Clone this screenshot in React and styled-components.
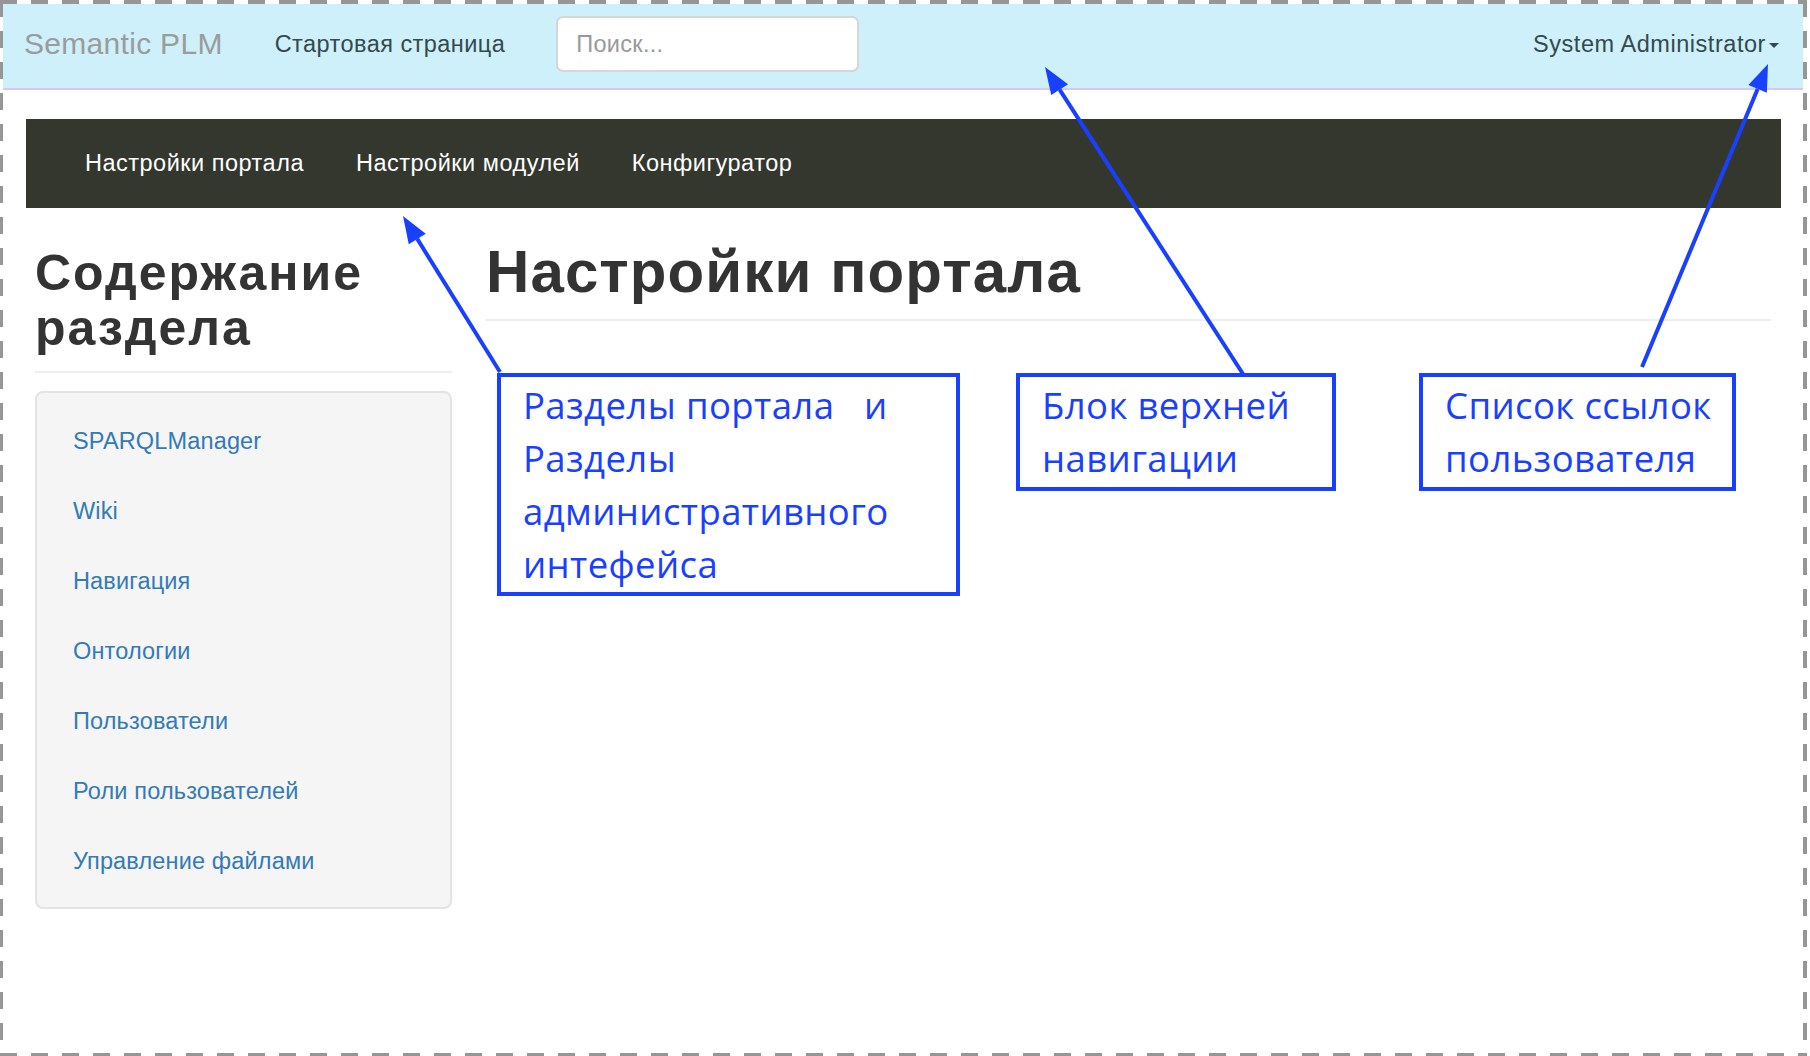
import React from "react";
import styled, { createGlobalStyle } from "styled-components";

const GlobalStyle = createGlobalStyle`
  html, body {
    margin: 0;
    padding: 0;
    background: #ffffff;
  }
  body {
    font-family: "Liberation Sans", Arial, sans-serif;
    font-size: 23.5px;
    color: #333333;
  }
  * {
    box-sizing: border-box;
  }
`;

const dashH = "repeating-linear-gradient(90deg, #969696 0 17px, transparent 17px 31px)";
const dashV = "repeating-linear-gradient(180deg, #969696 0 17px, transparent 17px 31px)";

const Frame = styled.div`
  position: relative;
  width: 1807px;
  height: 1056px;
  padding: 4px 4px 3px 3px;
  background:
    ${dashH} left top / 100% 4px no-repeat,
    ${dashH} left bottom / 100% 3px no-repeat,
    ${dashV} left top / 3px 100% no-repeat,
    ${dashV} right top / 4px 100% no-repeat;
`;

const TopBar = styled.header`
  display: flex;
  align-items: center;
  height: 86px;
  padding: 0 24px 4px 21px;
  background: #cdf0fb;
  border-bottom: 2px solid #d8c8ef;
`;

const Brand = styled.span`
  font-size: 30px;
  letter-spacing: 0.3px;
  color: #9b9b9b;
  margin-right: 52px;
`;

const TopLink = styled.span`
  color: #34494d;
  letter-spacing: 0.45px;
  margin-right: 51px;
`;

const Search = styled.input`
  width: 303px;
  height: 56px;
  padding: 0 18px;
  font-family: inherit;
  font-size: 23.5px;
  letter-spacing: 0.3px;
  color: #555;
  background: #ffffff;
  border: 2px solid #d6d6d6;
  border-radius: 7px;
  outline: none;

  &::placeholder {
    color: #999999;
  }
`;

const UserMenu = styled.span`
  display: flex;
  align-items: center;
  margin-left: auto;
  letter-spacing: 0.55px;
  color: #34494d;
`;

const Caret = styled.span`
  width: 0;
  height: 0;
  margin-left: 3px;
  margin-top: 2px;
  border-top: 5px solid #34494d;
  border-left: 5.5px solid transparent;
  border-right: 5.5px solid transparent;
`;

const AdminBar = styled.nav`
  display: flex;
  align-items: center;
  height: 89px;
  margin: 29px 22px 0 23px;
  padding-left: 33px;
  background: #33372e;
`;

const AdminLink = styled.span`
  padding: 0 26px;
  letter-spacing: 0.5px;
  color: #ffffff;
`;

const Content = styled.div`
  display: grid;
  grid-template-columns: 417px 1285px;
  column-gap: 34px;
  padding-left: 32px;
`;

const SideTitle = styled.h2`
  margin: 38px 0 18px;
  padding-bottom: 15px;
  font-size: 50px;
  line-height: 55px;
  font-weight: 700;
  letter-spacing: 2px;
  color: #333333;
  border-bottom: 2px solid #eeeeee;
`;

const Well = styled.ul`
  margin: 0;
  padding: 13px 0 11px;
  list-style: none;
  background: #f5f5f5;
  border: 2px solid #e3e3e3;
  border-radius: 8px;
`;

const WellLink = styled.li`
  height: 70px;
  line-height: 70px;
  padding-left: 36px;
  letter-spacing: 0.15px;
  color: #337ab7;
`;

const PageTitle = styled.h1`
  margin: 31px 0 0;
  padding-bottom: 14px;
  font-size: 60px;
  line-height: 66px;
  font-weight: 700;
  letter-spacing: 1.1px;
  color: #333333;
  border-bottom: 2px solid #eeeeee;
`;

const Note = styled.div`
  position: absolute;
  left: ${(p) => p.$x}px;
  top: ${(p) => p.$y}px;
  width: ${(p) => p.$w}px;
  height: ${(p) => p.$h}px;
  padding: 2px 8px 0 22px;
  border: 4px solid #1940ff;
  font-family: "Open Sans", "Noto Sans", sans-serif;
  font-size: 36.5px;
  line-height: 53px;
  letter-spacing: 0.4px;
  color: #1940ff;
  white-space: pre;
`;

const Arrows = styled.svg`
  position: absolute;
  left: 0;
  top: 0;
  pointer-events: none;
`;

const arrows = [
  { from: [500, 372], to: [403, 216] },
  { from: [1243, 374], to: [1045, 67] },
  { from: [1642, 367], to: [1768, 64] },
];

function Arrow({ from, to }) {
  const [x1, y1] = from;
  const [x2, y2] = to;
  const dx = x2 - x1;
  const dy = y2 - y1;
  const len = Math.hypot(dx, dy);
  const ux = dx / len;
  const uy = dy / len;
  const headLen = 27;
  const half = 10;
  const bx = x2 - ux * headLen;
  const by = y2 - uy * headLen;
  const pts = [
    [x2, y2],
    [bx - uy * half, by + ux * half],
    [bx + uy * half, by - ux * half],
  ]
    .map((p) => p.join(","))
    .join(" ");
  return (
    <g>
      <line x1={x1} y1={y1} x2={bx} y2={by} stroke="#1940ff" strokeWidth="4" />
      <polygon points={pts} fill="#1940ff" />
    </g>
  );
}

const sections = [
  "SPARQLManager",
  "Wiki",
  "Навигация",
  "Онтологии",
  "Пользователи",
  "Роли пользователей",
  "Управление файлами",
];

export default function App() {
  return (
    <>
      <GlobalStyle />
      <Frame>
        <TopBar>
          <Brand>Semantic PLM</Brand>
          <TopLink>Стартовая страница</TopLink>
          <Search placeholder="Поиск..." />
          <UserMenu>
            System Administrator
            <Caret />
          </UserMenu>
        </TopBar>

        <AdminBar>
          <AdminLink>Настройки портала</AdminLink>
          <AdminLink>Настройки модулей</AdminLink>
          <AdminLink>Конфигуратор</AdminLink>
        </AdminBar>

        <Content>
          <aside>
            <SideTitle>
              Содержание
              <br />
              раздела
            </SideTitle>
            <Well>
              {sections.map((s) => (
                <WellLink key={s}>{s}</WellLink>
              ))}
            </Well>
          </aside>
          <main>
            <PageTitle>Настройки портала</PageTitle>
          </main>
        </Content>

        <Note $x={497} $y={373} $w={463} $h={223}>
          {"Разделы портала   и\nРазделы\nадминистративного\nинтефейса"}
        </Note>
        <Note $x={1016} $y={373} $w={320} $h={118}>
          {"Блок верхней\nнавигации"}
        </Note>
        <Note $x={1419} $y={373} $w={317} $h={118}>
          {"Список ссылок\nпользователя"}
        </Note>

        <Arrows width="1807" height="1056">
          {arrows.map((a, i) => (
            <Arrow key={i} from={a.from} to={a.to} />
          ))}
        </Arrows>
      </Frame>
    </>
  );
}
